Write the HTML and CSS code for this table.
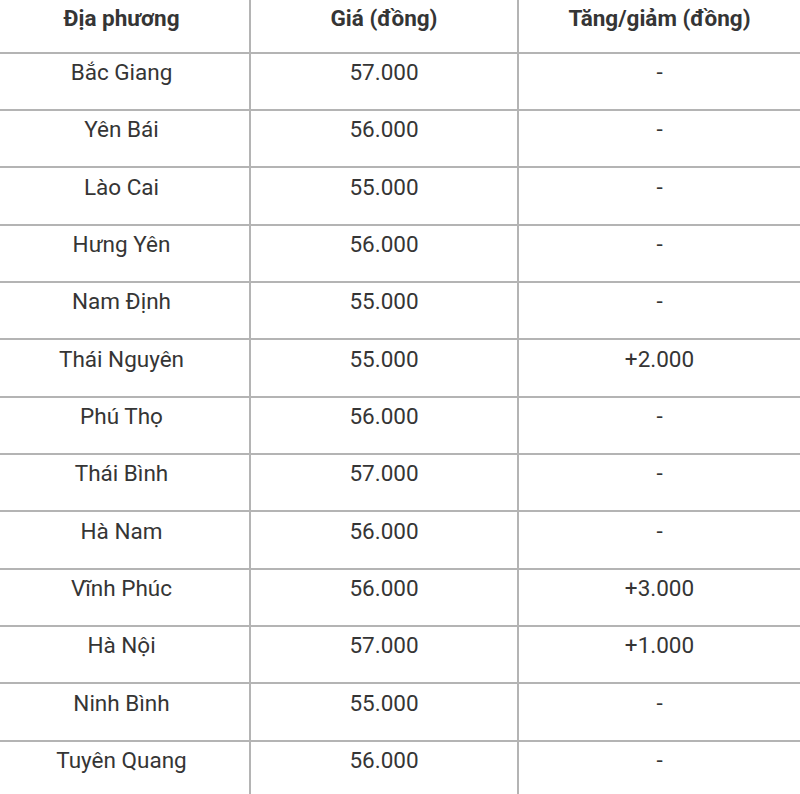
FILE: index.html
```html
<!DOCTYPE html>
<html lang="vi">
<head>
<meta charset="utf-8">
<title>Giá lợn hơi</title>
<link rel="stylesheet" href="styles.css">
</head>
<body>
<table class="price-table">
  <colgroup>
    <col class="col-place">
    <col class="col-price">
    <col class="col-change">
  </colgroup>
  <thead>
    <tr class="head-row">
      <th>Địa phương</th>
      <th>Giá (đồng)</th>
      <th>Tăng/giảm (đồng)</th>
    </tr>
  </thead>
  <tbody>
    <tr><td>Bắc Giang</td><td>57.000</td><td>-</td></tr>
    <tr><td>Yên Bái</td><td>56.000</td><td>-</td></tr>
    <tr><td>Lào Cai</td><td>55.000</td><td>-</td></tr>
    <tr><td>Hưng Yên</td><td>56.000</td><td>-</td></tr>
    <tr><td>Nam Định</td><td>55.000</td><td>-</td></tr>
    <tr><td>Thái Nguyên</td><td>55.000</td><td>+2.000</td></tr>
    <tr><td>Phú Thọ</td><td>56.000</td><td>-</td></tr>
    <tr><td>Thái Bình</td><td>57.000</td><td>-</td></tr>
    <tr><td>Hà Nam</td><td>56.000</td><td>-</td></tr>
    <tr><td>Vĩnh Phúc</td><td>56.000</td><td>+3.000</td></tr>
    <tr><td>Hà Nội</td><td>57.000</td><td>+1.000</td></tr>
    <tr><td>Ninh Bình</td><td>55.000</td><td>-</td></tr>
    <tr><td>Tuyên Quang</td><td>56.000</td><td>-</td></tr>
  </tbody>
</table>
</body>
</html>
```

FILE: styles.css
```css
html, body {
  margin: 0;
  padding: 0;
  background: #ffffff;
}

body {
  width: 800px;
  height: 794px;
  overflow: hidden;
  font-family: Roboto, "Liberation Sans", Arial, sans-serif;
  color: #353535;
}

.price-table {
  width: 800px;
  table-layout: fixed;
  border-collapse: collapse;
  font-size: 22.5px;
}

.col-place { width: 250px; }
.col-price { width: 268px; }
.col-change { width: 282px; }

.price-table th,
.price-table td {
  text-align: center;
  vertical-align: top;
  padding: 5.5px 0 0 0;
  line-height: normal;
  border-bottom: 2px solid #b4b4b4;
  border-right: 2px solid #b4b4b4;
}

.price-table th:first-child,
.price-table td:first-child {
  padding-right: 6px;
}

.price-table th:last-child,
.price-table td:last-child {
  border-right: none;
}

.price-table th {
  font-weight: 700;
  padding-top: 4.5px;
}

.head-row {
  height: 52.5px;
}

.price-table tbody tr {
  height: 57.35px;
}
```
